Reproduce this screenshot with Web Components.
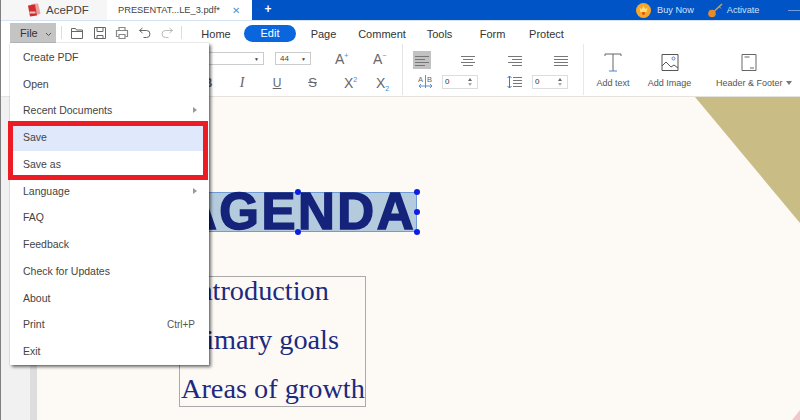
<!DOCTYPE html>
<html>
<head>
<meta charset="utf-8">
<title>AcePDF</title>
<style>
  html, body { margin: 0; padding: 0; height: 100%; overflow: hidden; background: #fff; }
  body { font-family: "Liberation Sans", Arial, sans-serif; }
</style>
</head>
<body>
<ace-app></ace-app>

<script>
const ICON = {
  open: `<svg width="14" height="14" viewBox="0 0 14 14" fill="none" stroke="#666"><path d="M1.5 12.5v-10h4l1 1.5h6v8.5z"/><path d="M1.5 5.5h11"/></svg>`,
  save: `<svg width="14" height="14" viewBox="0 0 14 14" fill="none" stroke="#666"><path d="M1.5 1.5h11v11h-11z"/><path d="M4 1.5v4h6v-4M4 12.5v-3h6v3"/></svg>`,
  print: `<svg width="14" height="14" viewBox="0 0 14 14" fill="none" stroke="#888" stroke-width="1.2"><path d="M4 4.5v-3h6v3M3.5 10.5h-2v-6h11v6h-2"/><path d="M4 8.5h6v4h-6z"/></svg>`,
  undo: `<svg width="14" height="14" viewBox="0 0 14 14" fill="none" stroke="#666"><path d="M4.5 2l-3 2.5 3 2.5M1.5 4.5h7a3.5 3.5 0 0 1 0 7h-3"/></svg>`,
  redo: `<svg width="14" height="14" viewBox="0 0 14 14" fill="none" stroke="#bbb"><path d="M9.5 2l3 2.5-3 2.5M12.5 4.5h-7a3.5 3.5 0 0 0 0 7h3"/></svg>`
};

// four grey strokes of an alignment button
function lines(widths, align) {
  return widths.map(w => `<i style="display:block;height:1px;background:#777;width:${w}px;margin-bottom:2px;${align}"></i>`).join("");
}

class AceTitlebar extends HTMLElement {
  constructor() {
    super();
    this.attachShadow({ mode: "open" });
    this.shadowRoot.innerHTML = `
      <style>
        :host { display: flex; height: 20px; background: #0054c6; color: #fff; font-size: 11px; border-bottom: 1px solid #d5e3f5; }
        .logo { width: 107px; background: #f6f6f6; color: #444; display: flex; align-items: center; padding-left: 27px; box-sizing: border-box; gap: 5px; font-size: 11.5px; }
        .tab { width: 145px; background: #fff; color: #444; display: flex; align-items: center; padding-left: 11px; box-sizing: border-box; font-size: 9.3px; white-space: nowrap; }
        .tab b { font-weight: normal; color: #5b8fd0; margin-left: 12px; font-size: 10px; }
        .plus { width: 32px; text-align: center; line-height: 19px; font-size: 12px; font-weight: bold; }
        .right { margin-left: auto; width: 164px; display: flex; align-items: center; }
        .buy { display: flex; align-items: center; font-size: 9.2px; color: #d3e2f8; }
        .buy span { margin-left: 6px; }
        .act { margin-left: 14px; }
        .act span { margin-left: 4px; }
        .min { margin-left: auto; width: 12px; height: 1px; background: #6f9fe0; }
        svg { display: block; }
      </style>
      <div class="logo">
        <svg width="14" height="14" viewBox="0 0 14 14"><path d="M4 1l7-.5 2.5 10-3 1.5z" fill="#e8a0a0"/><path d="M1 2.5l7-1 2 11-7 1z" fill="#d22b2b"/><path d="M2.5 8.5h6v2h-6z" fill="#fff" opacity=".7"/></svg>
        <span>AcePDF</span>
      </div>
      <div class="tab"><span>PRESENTAT...LE_3.pdf*</span><b>✕</b></div>
      <div class="plus">+</div>
      <div class="right">
        <div class="buy">
          <svg width="15" height="15" viewBox="0 0 15 15"><circle cx="7.5" cy="7.5" r="7.5" fill="#f5a72c"/><path d="M3.5 4.5l2.2 1.8L7.5 3l1.8 3.3 2.2-1.8-.8 4.5H4.3z" fill="#ffdd77"/><circle cx="7.5" cy="10.5" r="1.4" fill="#e2481c"/></svg>
          <span>Buy Now</span>
        </div>
        <div class="buy act">
          <svg width="15" height="15" viewBox="0 0 15 15"><path d="M6 8.5L14 1" stroke="#c8a25a" stroke-width="1.5"/><path d="M11 3.5l2 2" stroke="#c8a25a"/><circle cx="4" cy="10.500" r="3.800" fill="#e98a2a"/></svg>
          <span>Activate</span>
        </div>
        <i class="min"></i>
      </div>`;
  }
}
customElements.define("ace-titlebar", AceTitlebar);

class AceMenubar extends HTMLElement {
  constructor() {
    super();
    this.attachShadow({ mode: "open" });
    this.shadowRoot.innerHTML = `
      <style>
        :host { display: flex; align-items: center; height: 23px; padding-left: 10px; font-size: 11px; color: #333; }
        .file { width: 46px; height: 20px; align-self: flex-start; margin-top: 2px; background: #c4c4c4; display: flex; align-items: center; padding-left: 10px; box-sizing: border-box; gap: 7px; }
        .file svg { margin-top: 3px; }
        .sep { width: 1px; height: 13px; background: #ddd; }
        .tools { display: flex; gap: 8.5px; align-items: center; margin: 1px 7px 0 8px; }
        .tabs { display: flex; align-items: center; margin: 2px 0 0 6px; }
        .tabs span { display: block; text-align: center; }
        .tabs .on { background: #0a66dc; color: #fff; border-radius: 9px; height: 17px; line-height: 17px; }
      </style>
      <div class="file">File <svg width="7" height="5" viewBox="0 0 7 5" fill="none" stroke="#555"><path d="M1 1l2.5 2.5L6 1"/></svg></div>
      <i class="sep" style="margin-left:5px"></i>
      <div class="tools">${ICON.open}${ICON.save}${ICON.print}${ICON.undo}${ICON.redo}</div>
      <i class="sep"></i>
      <div class="tabs">
        <span style="width:56px">Home</span>
        <span class="on" style="width:52px">Edit</span>
        <span style="width:55px">Page</span>
        <span style="width:62px">Comment</span>
        <span style="width:53px">Tools</span>
        <span style="width:53px">Form</span>
        <span style="width:55px">Protect</span>
      </div>`;
  }
}
customElements.define("ace-menubar", AceMenubar);

class AceRibbon extends HTMLElement {
  constructor() {
    super();
    this.attachShadow({ mode: "open" });
    this.shadowRoot.innerHTML = `
      <style>
        :host { display: flex; height: 52px; color: #555; font-size: 9px; border-bottom: 1px solid #e6e2dd; }
        .font { width: 403px; padding: 5.5px 0 0 200px; box-sizing: border-box; border-right: 1px solid #e4e4e4; margin-bottom: 1px; }
        .row { display: flex; align-items: center; height: 18px; }
        .font .r2 { margin-top: 6.5px; }
        .para .r2 { margin-top: 4px; }
        .sel { height: 13px; border: 1px solid #ccc; box-sizing: border-box; display: flex; align-items: center; justify-content: space-between; padding: 0 4px; font-size: 8px; color: #444; }
        .g { color: #666; font-size: 14px; line-height: 18px; }
        sup, sub { font-size: 7px; color: #4d85cc; line-height: 0; }
        sup { vertical-align: 6px; }
        sub { vertical-align: -3px; }
        .para { width: 181px; padding: 7px 0 0 10px; box-sizing: border-box; border-right: 1px solid #e8e8e8; margin-bottom: 1px; }
        .al { width: 18px; height: 18px; padding: 5px 2px 0; box-sizing: border-box; }
        .al.on { background: #c2c2c2; }
        .spin { width: 36px; height: 14px; border: 1px solid #ddd; box-sizing: border-box; font-size: 8px; padding: 1px 2px; position: relative; color: #333; }
        .spin::after { content: ""; position: absolute; right: 5px; top: 2px; border: 2px solid transparent; border-bottom: 3px solid #666; border-top: 0; }
        .spin::before { content: ""; position: absolute; right: 5px; bottom: 2px; border: 2px solid transparent; border-top: 3px solid #aaa; border-bottom: 0; }
        .ins { display: flex; flex: 1; padding-top: 9px; }
        .btn { display: flex; flex-direction: column; align-items: center; gap: 6px; white-space: nowrap; }
        svg { display: block; }
        .caret { display: inline-block; border: 3px solid transparent; border-top: 4px solid #777; border-bottom: 0; margin-left: 3px; vertical-align: 1px; }
      </style>
      <div class="font">
        <div class="row">
          <div class="sel" style="width:64px;border-left:0;justify-content:flex-end"><span style="font-size:5px">▼</span></div>
          <div class="sel" style="width:36px;margin-left:11px"><span>44</span><span style="font-size:5px">▼</span></div>
          <div class="g" style="width:20px;margin-left:24px">A<sup>+</sup></div>
          <div class="g" style="width:20px;margin-left:18px">A<sup>−</sup></div>
        </div>
        <div class="row r2">
          <div class="g" style="width:12px;margin-left:2px;text-align:center;font-weight:bold;font-size:12px">B</div>
          <div class="g" style="width:12px;margin-left:22px;text-align:center;font:italic 14px/18px 'Liberation Serif',serif">I</div>
          <div class="g" style="width:12px;margin-left:23px;text-align:center;text-decoration:underline;font-size:12px">U</div>
          <div class="g" style="width:13px;margin-left:23px;text-align:center;text-decoration:line-through;font-size:13px">S</div>
          <div class="g" style="width:20px;margin-left:25px">X<sup>2</sup></div>
          <div class="g" style="width:20px;margin-left:12px">X<sub>2</sub></div>
        </div>
      </div>
      <div class="para">
        <div class="row">
          <div class="al on">${lines([14, 10, 14, 10], "margin-right:auto")}</div>
          <div class="al" style="margin-left:28px">${lines([14, 10, 14, 10], "margin-left:auto;margin-right:auto")}</div>
          <div class="al" style="margin-left:27px;padding-right:0">${lines([14, 10, 14, 10], "margin-left:auto")}</div>
          <div class="al" style="margin-left:30px">${lines([14, 14, 14, 14], "")}</div>
        </div>
        <div class="row r2">
          <svg width="15" height="14" viewBox="0 0 15 14" style="margin-left:5px" fill="none">
            <text x="0" y="7" font-size="7.5" fill="#666" font-family="Liberation Sans">A</text>
            <text x="9" y="7" font-size="7.5" fill="#666" font-family="Liberation Sans">B</text>
            <path d="M7.5 0v13M1 11h13M3 9l-2 2 2 2M12 9l2 2-2 2" stroke="#4d85cc" stroke-width=".9"/>
          </svg>
          <div class="spin" style="margin-left:9px">0</div>
          <svg width="15" height="14" viewBox="0 0 15 14" style="margin-left:29px" fill="none">
            <path d="M2.5 1v12M.5 3l2-2 2 2M.5 11l2 2 2-2" stroke="#2f7bd6"/>
            <path d="M6 2.5h9M6 5.5h9M6 8.5h9M6 11.5h9" stroke="#777"/>
          </svg>
          <div class="spin" style="margin-left:10px">0</div>
        </div>
      </div>
      <div class="ins">
        <div class="btn" style="margin-left:9px;width:40px">
          <svg width="18" height="19" viewBox="0 0 18 19" fill="none" stroke="#666"><path d="M1 3V1h16v2M9 1v17"/><path d="M5 18h8" stroke="#4d85cc"/></svg>
          <span>Add text</span>
        </div>
        <div class="btn" style="margin-left:11.5px;width:50px">
          <svg width="18" height="19" viewBox="0 0 18 19" fill="none" stroke="#555"><path d="M1 1.5h16v16H1z"/><path d="M1 13l4-4 5 5 3-2 4 3"/><circle cx="12.5" cy="5.5" r="1.5" stroke="#4d85cc"/></svg>
          <span>Add Image</span>
        </div>
        <div class="btn" style="margin-left:21.5px;align-items:flex-start">
          <svg width="16" height="19" viewBox="0 0 16 19" fill="none" stroke="#666" style="margin-left:25px"><path d="M1 1.5h14v16H1z"/><path d="M3.5 4h5M9 15h4"/></svg>
          <span>Header &amp; Footer<i class="caret"></i></span>
        </div>
      </div>`;
  }
}
customElements.define("ace-ribbon", AceRibbon);

class AceFileMenu extends HTMLElement {
  constructor() {
    super();
    this.attachShadow({ mode: "open" });
    const items = [
      ["Create PDF"], ["Open"], ["Recent Documents", "sub"], ["Save", "hi"], ["Save as"],
      ["Language", "sub"], ["FAQ"], ["Feedback"], ["Check for Updates"], ["About"],
      ["Print", "key"], ["Exit"]
    ];
    const rows = items.map(([t, k]) => `
      <div class="item ${k === "hi" ? "hi" : ""}">
        <span>${t}</span>
        ${k === "sub" ? `<i class="arrow"></i>` : ""}
        ${k === "key" ? `<span class="key">Ctrl+P</span>` : ""}
      </div>`).join("");
    this.shadowRoot.innerHTML = `
      <style>
        :host { display: block; position: absolute; left: 10px; top: 43px; width: 199px; background: #fff; box-shadow: 2px 2px 3px rgba(0,0,0,.55), 0 0 1px rgba(0,0,0,.35); font-size: 10.5px; color: #444; padding: .5px 0; }
        .item { height: 26.75px; display: flex; align-items: center; justify-content: space-between; padding: 0 12px 0 13px; box-sizing: border-box; }
        .hi { background: #dfe9fb; margin-right: 6px; padding-right: 6px; }
        .arrow { border: 3px solid transparent; border-left: 4px solid #999; border-right: 0; }
        .key { color: #555; font-size: 10px; margin-right: 2px; }
        .mark { position: absolute; left: -2px; top: 78px; width: 200px; height: 59px; border: 5px solid #ed1c24; box-sizing: border-box; }
      </style>
      ${rows}
      <div class="mark"></div>`;
  }
}
customElements.define("ace-file-menu", AceFileMenu);

class AceCanvas extends HTMLElement {
  constructor() {
    super();
    this.attachShadow({ mode: "open" });
    this.shadowRoot.innerHTML = `
      <style>
        :host { display: block; position: relative; flex: 1; overflow: hidden; background: #f1f1f1; }
        .page { position: absolute; left: 30px; right: 0; top: 0; bottom: 0; background: #fdfaf6; border-left: 7px solid #ddd; }
        .tri { position: absolute; left: 0; top: 0; width: 800px; height: 323px; }
        .title { position: absolute; left: 179px; top: 95px; width: 238px; height: 40px; background: #b3cbdc; border: 1px solid #6f9bd6; box-sizing: border-box; color: #15237a; font: bold 51px/38px "Liberation Sans", Arial, sans-serif; font-kerning: none; letter-spacing: 2.5px; -webkit-text-stroke: 1.5px #15237a; white-space: nowrap; }
        .h { position: absolute; width: 6px; height: 6px; background: #0a1ee6; border-radius: 50%; }
        .list { position: absolute; left: 179px; top: 179px; width: 187px; height: 131px; border: 1px solid #aaa; box-sizing: border-box; color: #1c2a80; font: 28.3px/29px "Liberation Serif", "Times New Roman", serif; white-space: nowrap; padding-left: 1px; display: flex; flex-direction: column; gap: 20px; }
        .list div:first-child { padding-left: 8px; margin-top: -1px; }
      </style>
      <div class="page"></div>
      <svg class="tri" viewBox="0 0 800 323"><path d="M695 0H800V126z" fill="#c9bc85"/><path d="M800 313V323H792z" fill="#f0c8cc"/></svg>
      <div class="title">AGENDA</div>
      <i class="h" style="left:295px;top:92px"></i>
      <i class="h" style="left:414px;top:92px"></i>
      <i class="h" style="left:414px;top:112px"></i>
      <i class="h" style="left:295px;top:132px"></i>
      <i class="h" style="left:414px;top:132px"></i>
      <div class="list">
        <div>Introduction</div>
        <div>Primary goals</div>
        <div>Areas of growth</div>
      </div>`;
  }
}
customElements.define("ace-canvas", AceCanvas);

class AceApp extends HTMLElement {
  constructor() {
    super();
    this.attachShadow({ mode: "open" });
    this.shadowRoot.innerHTML = `
      <style>
        :host { display: flex; flex-direction: column; position: relative; width: 800px; height: 420px; overflow: hidden; background: #fff; font-family: "Liberation Sans", Arial, sans-serif; }
        .edge { position: absolute; left: 0; top: 0; bottom: 0; width: 1px; background: #808080; }
      </style>
      <ace-titlebar></ace-titlebar>
      <ace-menubar></ace-menubar>
      <ace-ribbon></ace-ribbon>
      <ace-canvas></ace-canvas>
      <ace-file-menu></ace-file-menu>
      <div class="edge"></div>`;
  }
}
customElements.define("ace-app", AceApp);
</script>
</body>
</html>
